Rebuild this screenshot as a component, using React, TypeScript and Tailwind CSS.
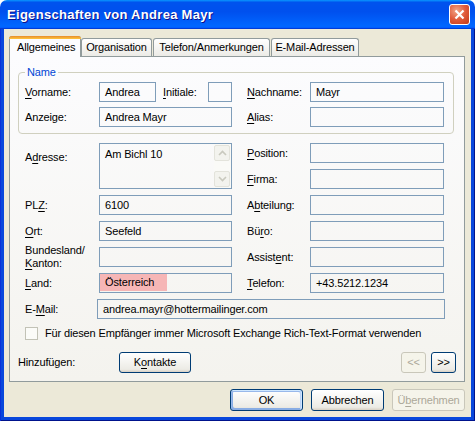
import type { ReactNode } from "react";

function U({ children }: { children: ReactNode }) {
  return <span className="underline underline-offset-[2px]">{children}</span>;
}

function Field({
  className = "",
  children,
}: {
  className?: string;
  children?: ReactNode;
}) {
  return (
    <div
      className={`flex h-[20px] shrink-0 items-center border border-[#7F9DB9] pl-[5px] ${className}`}
    >
      {children}
    </div>
  );
}

function RightPair({ label, value }: { label: ReactNode; value?: string }) {
  return (
    <div className="ml-[15px] flex h-[20px] items-center">
      <div className="w-[63px] shrink-0">{label}</div>
      <Field className="w-[134px]">{value}</Field>
    </div>
  );
}

function Row({
  label,
  value,
  right,
  rightValue,
}: {
  label: ReactNode;
  value?: string;
  right: ReactNode;
  rightValue?: string;
}) {
  return (
    <div className="mt-[6px] flex h-[20px] items-center">
      <div className="w-[74px] shrink-0 leading-[13px]">{label}</div>
      <Field className="w-[133px]">{value}</Field>
      <RightPair label={right} value={rightValue} />
    </div>
  );
}

function Tab({ className, children }: { className: string; children: ReactNode }) {
  return (
    <div
      className={`flex h-[18px] items-center justify-center rounded-t-[3px] border border-b-0 border-[#919B9C] bg-gradient-to-b from-white to-[#ECEBE6] ${className}`}
    >
      {children}
    </div>
  );
}

function XpButton({
  className = "",
  disabled,
  isDefault,
  children,
}: {
  className?: string;
  disabled?: boolean;
  isDefault?: boolean;
  children: ReactNode;
}) {
  const look = disabled
    ? "border-[#C9C7BA] bg-[#F5F4EA] text-[#ACA899]"
    : "border-[#003C74] bg-[linear-gradient(180deg,#ffffff,#ecebe5_86%,#d8d0c4)] text-black";
  const glow = isDefault
    ? "shadow-[inset_-1px_1px_#cee7ff,inset_1px_2px_#98b8ea,inset_-2px_2px_#bcd4f6,inset_1px_-1px_#89ade4,inset_2px_-2px_#89ade4]"
    : "";
  return (
    <button
      type="button"
      className={`flex shrink-0 items-center justify-center rounded-[3px] border ${look} ${glow} ${className}`}
    >
      {children}
    </button>
  );
}

function ScrollArrow({ up }: { up?: boolean }) {
  return (
    <div className="flex h-[16px] w-[16px] items-center justify-center rounded-[2px] border border-[#E3E3DB] bg-[#F3F3EE]">
      <svg width="9" height="6" viewBox="0 0 9 6" aria-hidden="true">
        <path
          d={up ? "M1 5 L4.5 1.5 L8 5" : "M1 1 L4.5 4.5 L8 1"}
          fill="none"
          stroke="#C9C9BE"
          strokeWidth="1.6"
        />
      </svg>
    </div>
  );
}

export default function App() {
  return (
    <div className="flex h-[421px] w-[475px] flex-col bg-white font-['Liberation_Sans',Arial,sans-serif] text-[11px] tracking-[-0.14px] text-black">
      {/* title bar */}
      <div className="flex h-[29px] shrink-0 items-center justify-between rounded-t-[7px] bg-[linear-gradient(180deg,#0997ff,#0053ee_8%,#0050ee_40%,#0066ff_88%,#0066ff_93%,#005bff_95%,#003dd7_96%,#003dd7)] pl-[7px] pr-[5px]">
        <span className="text-[13px] font-bold tracking-[0.3px] text-white [text-shadow:1px_1px_#0f1089]">
          Eigenschaften von Andrea Mayr
        </span>
        <div className="flex h-[21px] w-[21px] items-center justify-center rounded-[3px] border border-white bg-[radial-gradient(circle_at_35%_30%,#f2a587,#e05a3a_50%,#c23a18)]">
          <svg width="11" height="11" viewBox="0 0 11 11" aria-hidden="true">
            <path d="M1.5 1.5 L9.5 9.5 M9.5 1.5 L1.5 9.5" stroke="white" strokeWidth="2.2" />
          </svg>
        </div>
      </div>

      {/* window frame + body */}
      <div className="flex flex-1 flex-col bg-[#0847DC] px-[4px] pb-[4px] shadow-[inset_1px_0_#0831d9,inset_-1px_-1px_#00138c]">
        <div className="flex flex-1 flex-col bg-[#ECE9D8]">
          {/* tabs */}
          <div className="mt-[7px] flex h-[20px] items-end pl-[5px]">
            <div className="relative z-10 -mb-px flex h-[21px] w-[72px] flex-col rounded-t-[3px] border border-b-0 border-[#919B9C] bg-[#FCFCFE]">
              <div className="-mx-px -mt-px h-[3px] rounded-t-[3px] bg-gradient-to-b from-[#E68B2C] to-[#FFC73C]" />
              <div className="flex flex-1 items-center pb-[1px] pl-[7px]">Allgemeines</div>
            </div>
            <Tab className="w-[71px]">Organisation</Tab>
            <Tab className="ml-px w-[117px]">Telefon/Anmerkungen</Tab>
            <Tab className="ml-px w-[88px]">E-Mail-Adressen</Tab>
          </div>

          {/* panel */}
          <div className="ml-[5px] flex h-[326px] w-[456px] flex-col border border-[#919B9C] bg-gradient-to-b from-[#FCFCFE] to-[#F4F3EE]">
            <fieldset className="ml-[8px] mt-[9px] w-[436px] rounded-[4px] border border-[#D0D0BF] px-[6px] pb-[6px]">
              <legend className="px-[2px] leading-[13px] text-[#0046D5]">Name</legend>
              <div className="mt-[3px] flex h-[20px] items-center">
                <div className="w-[74px] shrink-0">
                  <U>V</U>orname:
                </div>
                <Field className="w-[57px]">Andrea</Field>
                <div className="ml-[7px] w-[45px] shrink-0">
                  <U>I</U>nitiale:
                </div>
                <Field className="w-[24px]" />
                <RightPair
                  label={
                    <>
                      <U>N</U>achname:
                    </>
                  }
                  value="Mayr"
                />
              </div>
              <div className="mt-[5px] flex h-[20px] items-center">
                <div className="w-[74px] shrink-0">Anzeige:</div>
                <Field className="w-[133px]">Andrea Mayr</Field>
                <RightPair
                  label={
                    <>
                      <U>A</U>lias:
                    </>
                  }
                />
              </div>
            </fieldset>

            <div className="mt-[9px] flex flex-col pl-[15px]">
              <div className="flex">
                <div className="w-[74px] shrink-0 pt-[8px] leading-[13px]">
                  A<U>d</U>resse:
                </div>
                <div className="flex h-[46px] w-[133px] shrink-0 border border-[#7F9DB9]">
                  <div className="flex-1 pl-[5px] pt-[4px] leading-[13px]">Am Bichl 10</div>
                  <div className="flex w-[17px] flex-col justify-between bg-[#FAFAF7] py-[1px]">
                    <ScrollArrow up />
                    <ScrollArrow />
                  </div>
                </div>
                <div className="flex flex-col gap-[6px]">
                  <RightPair
                    label={
                      <>
                        <U>P</U>osition:
                      </>
                    }
                  />
                  <RightPair
                    label={
                      <>
                        <U>F</U>irma:
                      </>
                    }
                  />
                </div>
              </div>

              <Row
                label={
                  <>
                    PL<U>Z</U>:
                  </>
                }
                value="6100"
                right={
                  <>
                    A<U>b</U>teilung:
                  </>
                }
              />
              <Row
                label={
                  <>
                    <U>O</U>rt:
                  </>
                }
                value="Seefeld"
                right={
                  <>
                    Bü<U>r</U>o:
                  </>
                }
              />
              <Row
                label={
                  <>
                    Bundesland/
                    <br />
                    <U>K</U>anton:
                  </>
                }
                right={
                  <>
                    Assist<U>e</U>nt:
                  </>
                }
              />
              <div className="mt-[6px] flex h-[20px] items-center">
                <div className="w-[74px] shrink-0">
                  <U>L</U>and:
                </div>
                <div className="flex h-[20px] w-[133px] shrink-0 border border-[#7F9DB9]">
                  <span className="flex h-[17px] w-[67px] items-center bg-[#F6B6B6] pl-[5px]">
                    Österreich
                  </span>
                </div>
                <RightPair
                  label={
                    <>
                      <U>T</U>elefon:
                    </>
                  }
                  value="+43.5212.1234"
                />
              </div>
              <div className="mt-[6px] flex h-[20px] items-center">
                <div className="w-[72px] shrink-0">
                  E-<U>M</U>ail:
                </div>
                <Field className="w-[348px]">andrea.mayr@hottermailinger.com</Field>
              </div>

              <div className="mt-[8px] flex h-[13px] items-center">
                <div className="h-[13px] w-[13px] shrink-0 border border-[#C2C2B6] bg-[#FBFBF8]" />
                <span className="ml-[7px]">
                  Für diesen Empfänger immer Microsoft Exchange Rich-Text-Format verwenden
                </span>
              </div>
            </div>

            <div className="mt-[12px] flex h-[21px] items-center pl-[8px] pr-[8px]">
              <div className="w-[101px] shrink-0">Hinzufügen:</div>
              <XpButton className="h-[21px] w-[72px]">
                <span>
                  K<U>o</U>ntakte
                </span>
              </XpButton>
              <div className="flex-1" />
              <XpButton disabled className="h-[21px] w-[25px]">
                &lt;&lt;
              </XpButton>
              <XpButton className="ml-[5px] h-[21px] w-[25px]">&gt;&gt;</XpButton>
            </div>
          </div>

          {/* dialog buttons */}
          <div className="mt-[7px] flex justify-end gap-[8px] pr-[6px]">
            <XpButton isDefault className="h-[22px] w-[73px]">
              OK
            </XpButton>
            <XpButton className="h-[22px] w-[73px]">Abbrechen</XpButton>
            <XpButton disabled className="h-[22px] w-[73px]">
              <span>
                Ü<U>b</U>ernehmen
              </span>
            </XpButton>
          </div>
        </div>
      </div>
    </div>
  );
}
